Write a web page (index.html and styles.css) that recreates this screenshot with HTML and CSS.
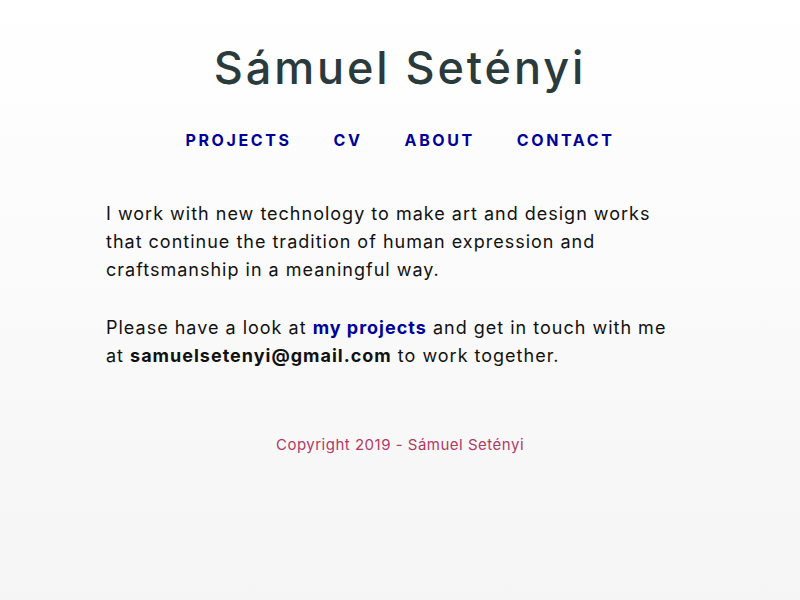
FILE: index.html
```html
<!DOCTYPE html>
<html lang="en">
<head>
<meta charset="utf-8">
<title>Sámuel Setényi</title>
<link rel="stylesheet" href="styles.css">
</head>
<body>
<div class="page">
  <header class="header">
    <h1 class="title">Sámuel Setényi</h1>
    <nav class="nav">
      <a class="nav-link" href="#">Projects</a>
      <a class="nav-link" href="#">CV</a>
      <a class="nav-link" href="#">About</a>
      <a class="nav-link" href="#">Contact</a>
    </nav>
  </header>
  <main class="content">
    <p class="text">I work with new technology to make art and design works that continue the tradition of human expression and craftsmanship in a meaningful way.</p>
    <p class="text">Please have a look at <a class="inline-link" href="#">my projects</a> and get in touch with me at <strong class="email">samuelsetenyi@gmail.com</strong> to work together.</p>
  </main>
  <footer class="footer">Copyright 2019 - Sámuel Setényi</footer>
</div>
</body>
</html>
```
FILE: styles.css
```css
html, body {
  margin: 0;
  padding: 0;
  min-height: 100%;
}
html {
  height: 100%;
}
body {
  background: linear-gradient(to bottom, #ffffff 0%, #f5f5f5 100%);
  font-family: "Inter", "Noto Sans", sans-serif;
  color: #111;
}
.page {
  display: flex;
  flex-direction: column;
  align-items: center;
  padding-top: 40px;
}
.header {
  display: flex;
  flex-direction: column;
  align-items: center;
}
.title {
  margin: 0;
  font-size: 45px;
  font-weight: 500;
  letter-spacing: 2.9px;
  color: #2b3a3c;
  line-height: 56px;
}
.nav {
  display: flex;
  gap: 42px;
  margin-top: 32px;
}
.nav-link {
  color: #000099;
  text-decoration: none;
  text-transform: uppercase;
  font-weight: 700;
  font-size: 16px;
  letter-spacing: 2.6px;
  line-height: 24px;
}
.content {
  box-sizing: border-box;
  width: 588px;
  padding-right: 14px;
  margin-top: 48px;
}
.text {
  margin: 0 0 30px 0;
  font-size: 18px;
  line-height: 28px;
  letter-spacing: 1px;
}
.text:last-child {
  margin-bottom: 0;
}
.inline-link {
  color: #000099;
  font-weight: 700;
  text-decoration: none;
}
.email {
  font-weight: 700;
}
.footer {
  margin-top: 65px;
  font-size: 15px;
  line-height: 20px;
  letter-spacing: 0.5px;
  color: #b03a65;
}
```
